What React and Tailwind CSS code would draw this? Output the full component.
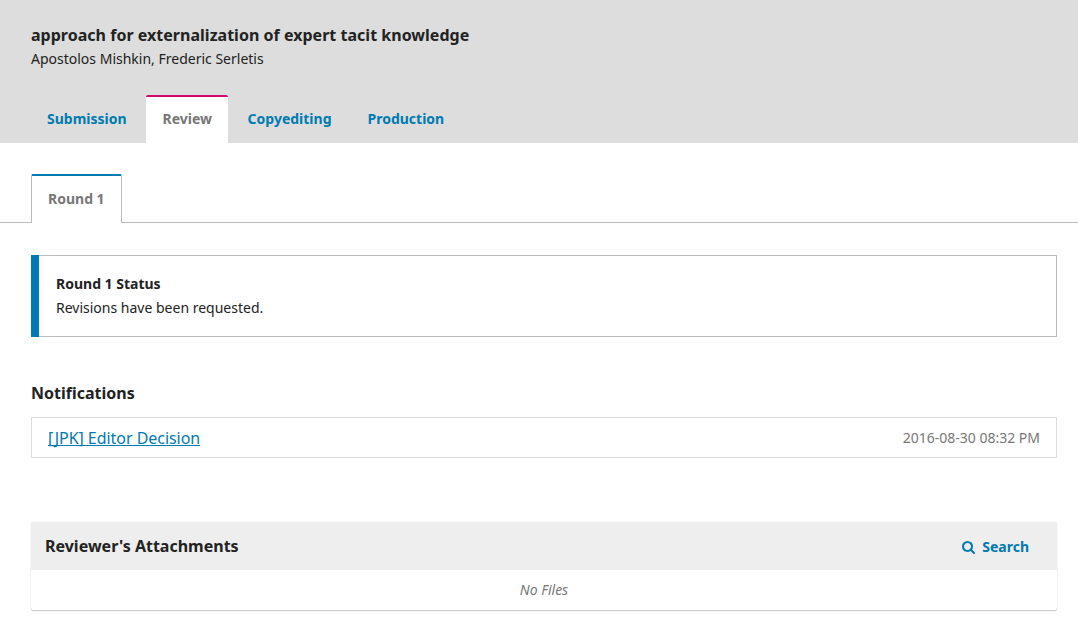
const stages = ["Submission", "Review", "Copyediting", "Production"];

function SearchIcon() {
  return (
    <svg viewBox="64 128 1664 1664" className="size-[13px]" fill="currentColor" aria-hidden="true">
      <path d="M1216 832q0-185-131.5-316.5t-316.5-131.5-316.5 131.5-131.5 316.5 131.5 316.5 316.5 131.5 316.5-131.5 131.5-316.5zm512 832q0 52-38 90t-90 38q-54 0-90-38l-343-342q-179 124-399 124-143 0-273.5-55.5t-225-150-150-225-55.5-273.5 55.5-273.5 150-225 225-150 273.5-55.5 273.5 55.5 225 150 150 225 55.5 273.5q0 220-124 399l343 343q37 37 37 90z" />
    </svg>
  );
}

export default function App() {
  return (
    <div className="h-[636px] w-[1078px] overflow-hidden bg-white font-['Noto_Sans',sans-serif] text-sm leading-6 text-[#222222]">
      <header className="h-[143px] bg-[#dddddd] pt-[23px]">
        <h1 className="pl-[31px] text-base leading-6 font-bold tracking-[0.02px]">
          approach for externalization of expert tacit knowledge
        </h1>
        <p className="pl-[31px]">Apostolos Mishkin, Frederic Serletis</p>
        <nav className="mt-6 flex h-12 pl-[31px] font-bold text-[#007ab2]">
          {stages.map((s) => (
            <a
              key={s}
              className={
                s === "Review"
                  ? "mr-1 -ml-px w-[82px] rounded-t-[2px] border-t-2 border-[#d00a6c] bg-white pt-[10px] pl-[17px] text-[#777777]"
                  : "mr-1 px-4 pt-3"
              }
            >
              {s}
            </a>
          ))}
        </nav>
      </header>
      <div className="flex h-20 items-end border-b border-[#bbbbbb] pl-[31px]">
        <div className="-mb-px h-[49px] w-[91px] rounded-t-[2px] border-x border-t-2 border-x-[#bbbbbb] border-t-[#007ab2] bg-white pt-[11px] pl-4 font-bold text-[#777777]">
          Round 1
        </div>
      </div>
      <main className="pr-[21px] pl-[31px]">
        <section className="mt-8 flex h-[82px]">
          <div className="w-2 bg-[#007ab2]" />
          <div className="flex-1 border border-l-0 border-[#bbbbbb] pt-4 pl-[17px]">
            <h2 className="font-bold">Round 1 Status</h2>
            <p>Revisions have been requested.</p>
          </div>
        </section>
        <h2 className="mt-11 text-base leading-6 font-bold">Notifications</h2>
        <div className="mt-3 flex h-[41px] items-center justify-between border border-[#dddddd] px-4">
          <a className="text-base tracking-[-0.04px] text-[#007ab2] underline [text-decoration-skip-ink:none]">
            [JPK] Editor Decision
          </a>
          <time className="text-[#777777]">2016-08-30 08:32 PM</time>
        </div>
        <section className="mt-16 h-[88px] rounded-[2px] shadow-[0_0_1px_rgba(0,0,0,0.2),0_1px_1px_rgba(0,0,0,0.2)]">
          <div className="flex h-12 items-center justify-between rounded-t-[2px] bg-[#eeeeee] pr-7 pl-[14px]">
            <h2 className="text-base font-bold">Reviewer's Attachments</h2>
            <a className="mt-0.5 flex items-center gap-[7px] font-bold text-[#007ab2]">
              <SearchIcon />
              Search
            </a>
          </div>
          <p className="pt-2 text-center text-[#777777] italic">No Files</p>
        </section>
      </main>
    </div>
  );
}
